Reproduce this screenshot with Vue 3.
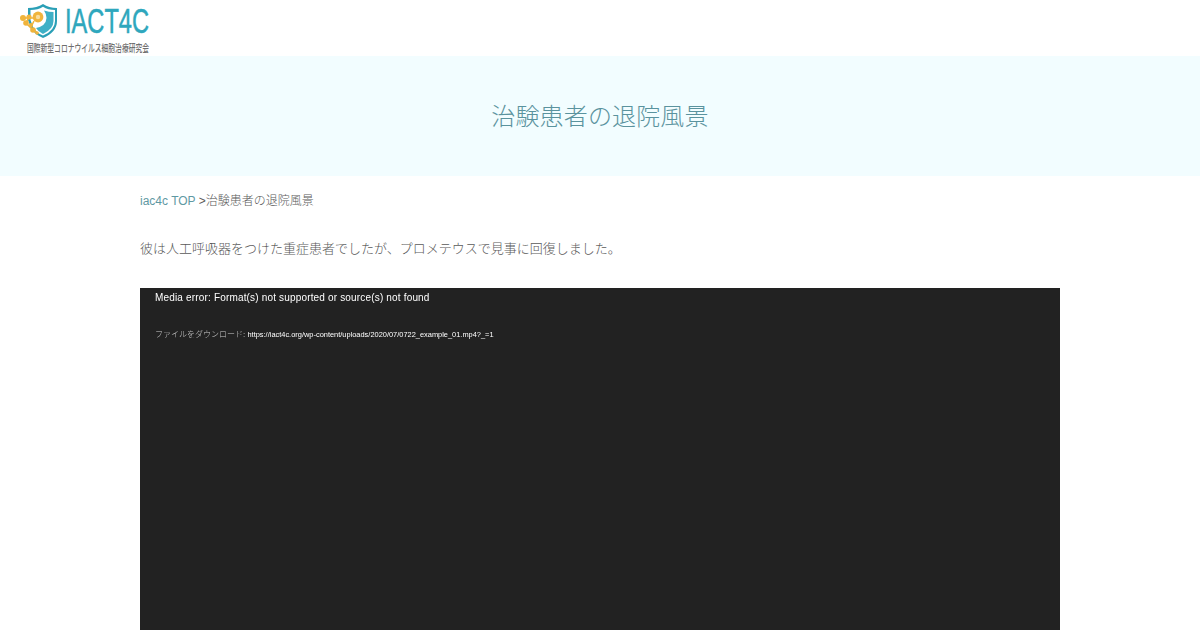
<script setup>
const title = '治験患者の退院風景'
</script>

<template>
  <div class="page">
    <header class="top">
      <a class="logo" href="#" aria-label="IACT4C">
        <svg width="230" height="56" viewBox="0 0 230 56">
          <path d="M28 8 Q37 8 43 4 Q49 8 57 8 V21 Q57 32 43 38 Q34 34 31 28 L28 20 Z" fill="#2a9fb6"/>
          <path d="M30.5 10 Q38 10 43 6.8 Q48 10 55 10 V21 Q55 30.5 43 35.6 Q36 32.5 33 27 L30.5 20 Z" fill="#fff"/>
          <path d="M44 10.5 Q49 12 53.5 12 V21 Q53.5 29 43 34 Q38 31.5 36 28 Q46 26 46.5 18 Q46.5 14 44 10.5 Z" fill="#3fb0c6"/>
          <path d="M23 18 H36 M29 17 L26 23 L33 30 L37 33 M34 21 L31 27" stroke="#f0b43c" stroke-width="1.6" fill="none"/>
          <g fill="#f0b43c">
            <circle cx="38" cy="17" r="5.4"/>
            <circle cx="23" cy="18" r="3"/><circle cx="29" cy="17" r="2.6"/>
            <circle cx="26" cy="23" r="2.8"/><circle cx="31" cy="25" r="2"/>
            <circle cx="33" cy="30" r="2.8"/><circle cx="37" cy="33" r="1.8"/>
          </g>
          <circle cx="38" cy="17" r="2.2" fill="#f9dd9c"/>
          <text class="brand" x="65" y="33" textLength="84" lengthAdjust="spacingAndGlyphs">IACT4C</text>
          <text class="sub" x="27" y="51.5" textLength="122" lengthAdjust="spacingAndGlyphs">国際新型コロナウイルス細胞治療研究会</text>
        </svg>
      </a>
    </header>
    <section class="hero"><h1>{{ title }}</h1></section>
    <main class="content">
      <p class="crumb"><a href="#">iac4c TOP</a> &gt;{{ title }}</p>
      <p class="lead">彼は人工呼吸器をつけた重症患者でしたが、プロメテウスで見事に回復しました。</p>
      <div class="player">
        <p class="err">Media error: Format(s) not supported or source(s) not found</p>
        <p class="dl">ファイルをダウンロード: <a href="#">https://iact4c.org/wp-content/uploads/2020/07/0722_example_01.mp4?_=1</a></p>
      </div>
    </main>
  </div>
</template>

<style>
html, body { margin: 0; background: #fff; overflow: hidden; }
</style>

<style scoped>
.page { height: 630px; overflow: hidden; font-family: "Liberation Sans", "Noto Sans CJK JP", sans-serif; color: #5a5a5a; }
.top { height: 56px; }
.logo { display: block; width: 230px; height: 56px; }
.logo svg { display: block; }
.brand { font: 400 35px "Liberation Sans", sans-serif; fill: #2ea7bd; stroke: #2ea7bd; stroke-width: .5px; }
.sub { font: 500 10.5px "Noto Sans CJK JP", sans-serif; fill: #6f6f6f; }
.hero { height: 120px; background: #f2fdff; display: flex; align-items: center; justify-content: center; }
h1 { margin: 0; font-size: 24px; font-weight: 300; line-height: 36px; letter-spacing: .15px; color: #5a939e; padding-top: 1px; }
.content { width: 920px; margin: 0 auto; }
.crumb { margin: 16px 0 0; font-size: 12px; line-height: 18px; font-weight: 300; }
a { color: #5f99a3; text-decoration: none; }
.lead { margin: 29px 0 0; font-size: 13px; line-height: 20px; font-weight: 300; }
.player { margin-top: 29px; height: 400px; background: #222; padding: 0 15px; box-sizing: border-box; color: #fff; }
.err { margin: 0; padding-top: 3px; font-size: 10px; line-height: 14px; letter-spacing: .17px; color: #fff; will-change: transform; }
.dl { margin: 23px 0 0; font-size: 8px; line-height: 14px; color: #ccc; font-weight: 300; will-change: transform; }
.dl a { color: #fff; font-size: 7.43px; font-weight: 400; }
</style>
